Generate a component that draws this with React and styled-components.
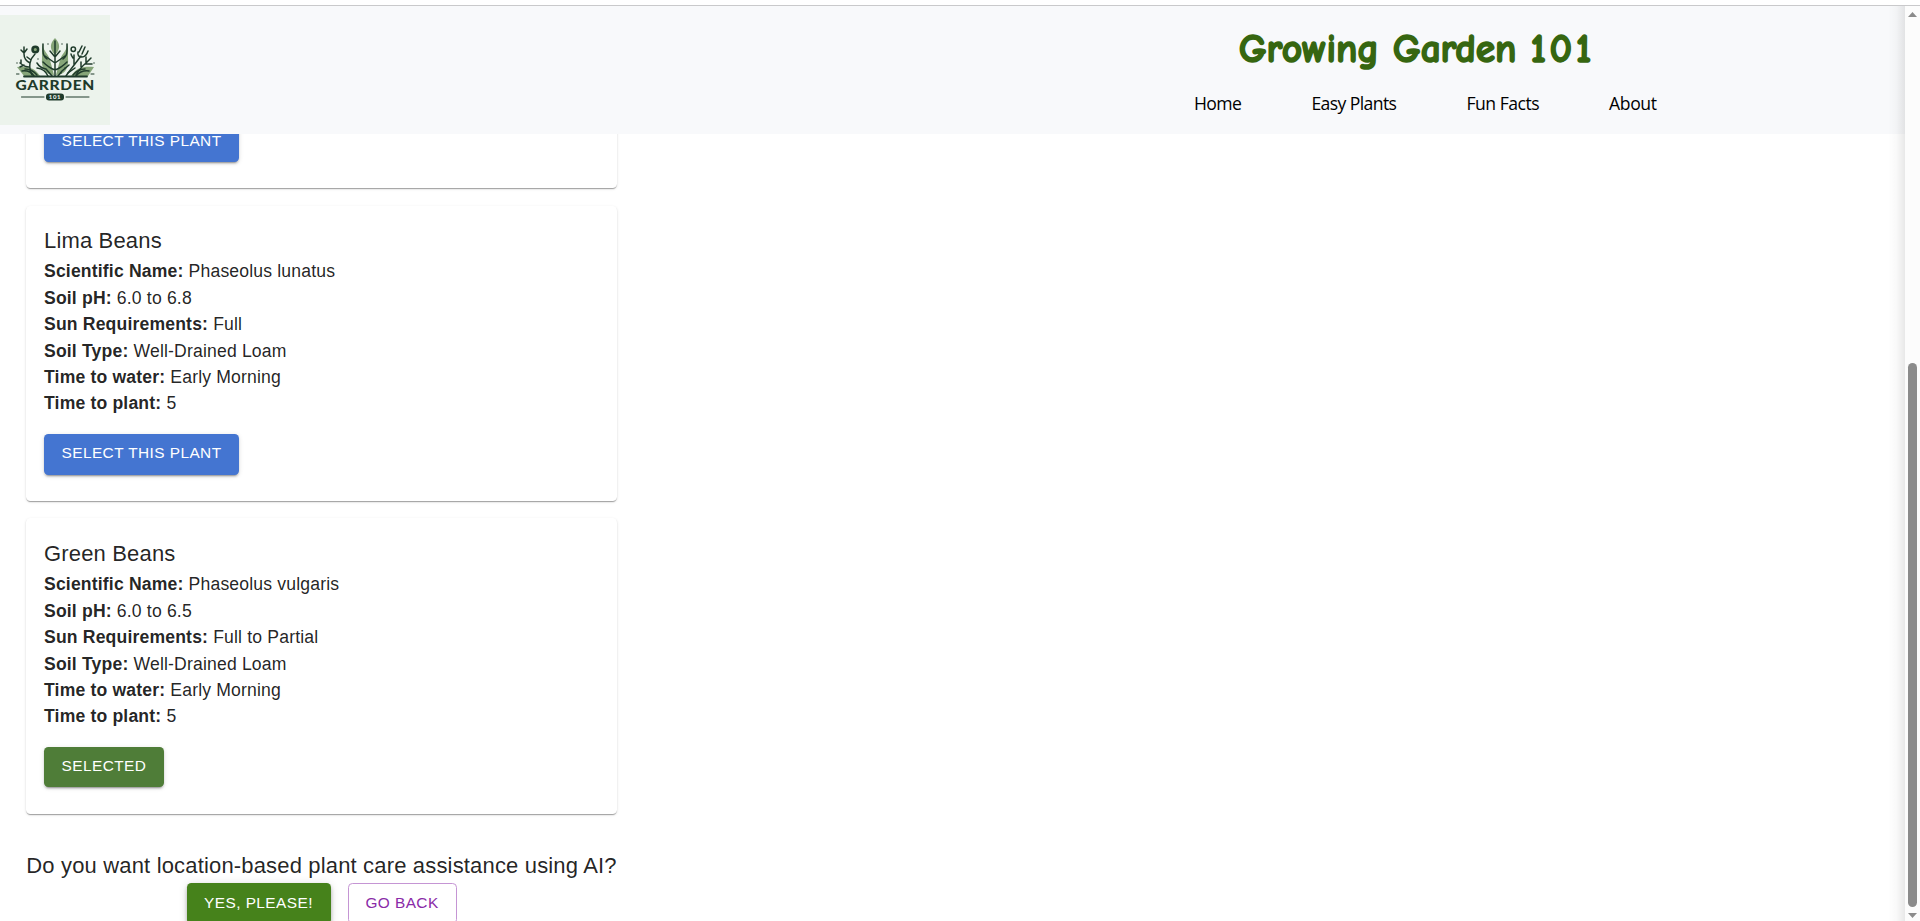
import React from "react";
import styled, { createGlobalStyle } from "styled-components";

const GlobalStyle = createGlobalStyle`
  * { box-sizing: border-box; }
  body {
    margin: 0;
    overflow: hidden;
    background: #fff;
    color: rgba(0, 0, 0, 0.87);
    font-family: "Liberation Sans", Arial, sans-serif;
  }
`;

const Window = styled.div`
  display: flex;
  width: 1920px;
  height: 921px;
  overflow: hidden;
  flex-direction: column;
  padding-top: 5px;
`;

const Frame = styled.div`
  flex: 1;
  min-height: 0;
  display: flex;
  border-top: 1px solid #c9c9cb;
`;

const Page = styled.div`
  position: relative;
  flex: 1;
  display: flex;
  flex-direction: column;
  min-width: 0;
  overflow: hidden;
`;

const EdgeShade = styled.div`
  position: absolute;
  top: 0;
  right: 0;
  bottom: 0;
  width: 17px;
  background: linear-gradient(to right, rgba(0, 0, 0, 0), rgba(0, 0, 0, 0.025) 50%, rgba(0, 0, 0, 0.09));
`;

const Header = styled.header`
  flex: none;
  display: flex;
  align-items: center;
  justify-content: space-between;
  height: 128px;
  background: #f8f9fb;
`;

const Logo = styled.svg`
  width: 110px;
  height: 110px;
  display: block;
`;

const Brand = styled.div`
  width: 463px;
  height: 128px;
  margin-right: 248px;
  display: flex;
  flex-direction: column;
  align-items: center;
`;

const Title = styled.h1`
  margin: 13px 21px 0 0;
  height: 60px;
  line-height: 60px;
  white-space: nowrap;
  color: #366610;
  font-family: "Comic Sans MS", "Comic Neue", Lato, sans-serif;
  font-size: 39.5px;
  font-weight: 900;
  letter-spacing: -0.1px;
  word-spacing: 0;
  -webkit-text-stroke: 1.5px #366610;
`;

const TitleNumber = styled.span`
  letter-spacing: 3.6px;
  margin-right: -3.6px;
`;

const Nav = styled.nav`
  width: 100%;
  display: flex;
  justify-content: space-between;
  margin-top: 10px;
`;

const NavLink = styled.a`
  color: #000;
  font-family: "Segoe UI", "Open Sans", sans-serif;
  font-size: 17.6px;
  line-height: 28px;
  letter-spacing: ${(p) => p.$track}px;
  margin-right: ${(p) => -p.$track}px;
  white-space: nowrap;
`;

const Main = styled.main`
  flex: 1;
  min-height: 0;
  overflow: hidden;
  padding-left: 26px;
`;

const List = styled.div`
  width: 591px;
  display: flex;
  flex-direction: column;
  gap: 17.6px;
  margin-top: -12.6px;
`;

const Card = styled.article`
  padding: ${(p) => (p.$scrolled ? 0 : "17.6px")} 17.6px 26.4px 18px;
  border-radius: 4.4px;
  background: #fff;
  box-shadow: 0 2px 1px -1px rgba(0, 0, 0, 0.2), 0 1px 1px rgba(0, 0, 0, 0.14),
    0 1px 3px rgba(0, 0, 0, 0.12);
`;

const PlantName = styled.h2`
  margin: 0;
  font-size: 22px;
  line-height: 35.2px;
  font-weight: 400;
  letter-spacing: 0.165px;
`;

const Fact = styled.p`
  margin: 0;
  font-size: 17.6px;
  line-height: 26.4px;
  letter-spacing: 0.165px;
`;

const palettes = {
  blue: "background: #4475d1; color: #fff;",
  green: "background: #4f7d38; color: #fff;",
  leaf: "background: #46821b; color: #fff;",
  outline: "background: #fff; color: #8a2ba8; border: 1px solid #c595d4;",
};

const Button = styled.button`
  display: flex;
  align-items: center;
  justify-content: center;
  width: ${(p) => p.$width}px;
  height: 40.15px;
  margin-top: ${(p) => p.$gap || 0}px;
  padding: 0 0 ${(p) => (p.$gap ? 3 : 1)}px;
  border: 0;
  border-radius: 4.4px;
  font-family: inherit;
  font-size: 15.4px;
  letter-spacing: 0.44px;
  text-transform: uppercase;
  white-space: nowrap;
  ${(p) => palettes[p.$tone]}
  box-shadow: ${(p) =>
    p.$tone === "outline"
      ? "none"
      : p.$tone === "leaf"
      ? "0 2px 4px -1px rgba(0,0,0,.2), 0 4px 5px rgba(0,0,0,.14), 0 1px 10px rgba(0,0,0,.12)"
      : "0 3px 1px -2px rgba(0,0,0,.2), 0 2px 2px rgba(0,0,0,.14), 0 1px 5px rgba(0,0,0,.12)"};
`;

const Prompt = styled.section`
  width: 591px;
  margin-top: 34.4px;
`;

const Question = styled.h2`
  margin: 0;
  font-size: 22px;
  line-height: 35.2px;
  font-weight: 400;
  letter-spacing: 0.165px;
  text-align: center;
  white-space: nowrap;
`;

const Actions = styled.div`
  display: flex;
  align-items: center;
  justify-content: center;
  gap: 17px;
`;

const ScrollBar = styled.aside`
  width: 15px;
  flex: none;
  display: flex;
  flex-direction: column;
  align-items: center;
  background: #fcfcfc;
  padding-top: 6px;
`;

const Thumb = styled.div`
  width: 9px;
  height: 544px;
  margin: 346px 0 6px;
  border-radius: 5px;
  background: #8b8b8b;
`;

const Arrow = styled.svg`
  width: 9px;
  height: 5px;
  flex: none;
  fill: #8b8b8b;
`;

function GardenLogo() {
  return (
    <Logo viewBox="0 0 110 110">
      <rect width="110" height="110" fill="#ecf3ec" />
      <g fill="#86a578">
        <path d="M42 28 C43 36 48 38 50 45 L54 60 C45 60 41 53 42 43Z" />
        <path d="M68 28 C67 36 62 38 60 45 L56 60 C65 60 69 53 68 43Z" />
        <path d="M55 23 C60 28 61 34 55 40 C49 34 50 28 55 23Z" />
        <path d="M17 52 C28 51 35 53 40 61 H24Z" />
        <path d="M94 52 C83 51 76 53 71 61 H88Z" />
      </g>
      <g fill="none" stroke="#1f3b2b" strokeWidth="1.5" strokeLinecap="round" strokeLinejoin="round">
        <path d="M55 26 V61 M55 42 L50 36 M55 42 L60 36 M55 48 L45 41 M55 48 L65 41 M55 55 Q49 53 43 47 M55 55 Q61 53 67 47" />
        <path d="M43 29 V36 Q43 41 47 44 M67 29 V36 Q67 41 63 44" />
        <path d="M32 60 Q29 54 30 48 Q31 43 35 39 M30 48 Q24 45 24 39 V32 M24 38 L21 35 M24 38 L27 34 M29 52 Q25 52 20 48 M24 50 L20 52 M21 45 V48 M31 45 L27 42" />
        <circle cx="35.3" cy="34.5" r="2.8" strokeWidth="2.5" fill="#86a578" />
        <circle cx="73.3" cy="34.3" r="2.2" />
        <path d="M68 58 L81 41 M78 37 Q77 42 82 42 Q86 42 88 36 M79 37 L82 31 M82 39 L85 32 M73 43 Q71 40 71 39 M74 50 V40" />
        <path d="M76 60 Q81 52 86 48 L91 43 M86 48 V42 M85 49 H92 M81 52 V47" />
        <path d="M37 48 Q40 53 46 54 L52 61 M37 53 Q45 54 48 61 M69 50 L62 56 L58 61 M75 53 L68 58 L66 61" />
        <path d="M25 54 Q32 54 37 60 M22 56 Q30 55 34 61 M85 54 Q78 54 73 60 M89 56 Q81 55 76 61" />
        <path d="M24 61.5 H87" strokeWidth="1.8" />
        <path d="M16.5 59 H19 M91 59 H94" strokeWidth="1" />
        <path d="M21.5 82 H44 M66 82 H89" strokeWidth="1" />
      </g>
      <g fill="#1f3b2b">
        <circle cx="17" cy="48" r=".7" />
        <circle cx="94" cy="48" r=".7" />
        <circle cx="48" cy="29" r=".7" />
        <circle cx="62" cy="29" r=".7" />
        <circle cx="61" cy="58" r=".7" />
        <circle cx="65" cy="53" r=".7" />
        <circle cx="38" cy="44" r=".7" />
        <rect x="46" y="78.5" width="18" height="7" rx="3" />
      </g>
      <text
        x="15.5" y="75" textLength="79.5" lengthAdjust="spacingAndGlyphs"
        fontFamily="Lato, sans-serif" fontWeight="900" fontSize="13.8" letterSpacing=".6" fill="#1f3b2b"
      >
        GARRDEN
      </text>
      <text
        x="55" y="84.2" textAnchor="middle" letterSpacing=".7"
        fontFamily="Lato, sans-serif" fontWeight="900" fontSize="6" fill="#ecf3ec"
      >
        101
      </text>
    </Logo>
  );
}

const links = [
  { label: "Home", track: -0.6 },
  { label: "Easy Plants", track: -0.6 },
  { label: "Fun Facts", track: -0.5 },
  { label: "About", track: -0.4 },
];

const plants = [
  {
    name: "Lima Beans",
    facts: [
      ["Scientific Name:", "Phaseolus lunatus"],
      ["Soil pH:", "6.0 to 6.8"],
      ["Sun Requirements:", "Full"],
      ["Soil Type:", "Well-Drained Loam"],
      ["Time to water:", "Early Morning"],
      ["Time to plant:", "5"],
    ],
  },
  {
    name: "Green Beans",
    selected: true,
    facts: [
      ["Scientific Name:", "Phaseolus vulgaris"],
      ["Soil pH:", "6.0 to 6.5"],
      ["Sun Requirements:", "Full to Partial"],
      ["Soil Type:", "Well-Drained Loam"],
      ["Time to water:", "Early Morning"],
      ["Time to plant:", "5"],
    ],
  },
];

function SelectButton({ selected, gap }) {
  return (
    <Button $tone={selected ? "green" : "blue"} $width={selected ? 120 : 195} $gap={gap}>
      {selected ? "Selected" : "Select this plant"}
    </Button>
  );
}

export default function App() {
  return (
    <Window>
      <GlobalStyle />
      <Frame>
        <Page>
          <Header>
            <GardenLogo />
            <Brand>
              <Title>Growing Garden <TitleNumber>101</TitleNumber></Title>
              <Nav>
                {links.map((l) => (
                  <NavLink key={l.label} $track={l.track}>{l.label}</NavLink>
                ))}
              </Nav>
            </Brand>
          </Header>
          <Main>
            <List>
              <Card $scrolled>
                <SelectButton />
              </Card>
              {plants.map((p) => (
                <Card key={p.name}>
                  <PlantName>{p.name}</PlantName>
                  {p.facts.map(([k, v]) => (
                    <Fact key={k}><strong>{k}</strong> {v}</Fact>
                  ))}
                  <SelectButton selected={p.selected} gap={17.6} />
                </Card>
              ))}
            </List>
            <Prompt>
              <Question>Do you want location-based plant care assistance using AI?</Question>
              <Actions>
                <Button $tone="leaf" $width={144}>Yes, please!</Button>
                <Button $tone="outline" $width={109}>Go back</Button>
              </Actions>
            </Prompt>
          </Main>
          <EdgeShade />
        </Page>
        <ScrollBar>
          <Arrow viewBox="0 0 9 5"><path d="M0 5 L4.5 0 L9 5Z" /></Arrow>
          <Thumb />
          <Arrow viewBox="0 0 9 5"><path d="M0 0 H9 L4.5 5Z" /></Arrow>
        </ScrollBar>
      </Frame>
    </Window>
  );
}
